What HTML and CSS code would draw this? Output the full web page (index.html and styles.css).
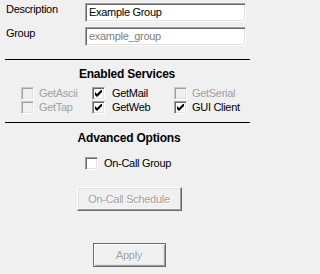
FILE: index.html
```html
<!DOCTYPE html>
<html>
<head>
<meta charset="utf-8">
<link rel="stylesheet" href="styles.css">
</head>
<body>
<div class="panel">
  <div class="field">
    <span class="label">Description</span>
    <div class="textbox">Example Group</div>
  </div>
  <div class="field second">
    <span class="label">Group</span>
    <div class="textbox disabled">example_group</div>
  </div>
  <div class="rule first-rule"></div>
  <div class="title enabled-title">Enabled Services</div>
  <div class="services">
    <div class="check off"><span class="box"></span><span class="txt">GetAscii</span></div>
    <div class="check mid"><span class="box"><svg width="7" height="7" viewBox="0 0 7 7"><polygon points="0,2 2,4 6,0 7,0 7,2 2,7 0,5" fill="#000"/></svg></span><span class="txt">GetMail</span></div>
    <div class="check off"><span class="box"></span><span class="txt">GetSerial</span></div>
    <div class="check off"><span class="box"></span><span class="txt">GetTap</span></div>
    <div class="check mid"><span class="box"><svg width="7" height="7" viewBox="0 0 7 7"><polygon points="0,2 2,4 6,0 7,0 7,2 2,7 0,5" fill="#000"/></svg></span><span class="txt">GetWeb</span></div>
    <div class="check"><span class="box"><svg width="7" height="7" viewBox="0 0 7 7"><polygon points="0,2 2,4 6,0 7,0 7,2 2,7 0,5" fill="#000"/></svg></span><span class="txt">GUI Client</span></div>
  </div>
  <div class="rule second-rule"></div>
  <div class="title adv-title">Advanced Options</div>
  <div class="oncall">
    <div class="check wide"><span class="box"></span><span class="txt">On-Call Group</span></div>
  </div>
  <div class="buttons">
    <div class="button schedule">On-Call Schedule</div>
    <div class="button apply">Apply</div>
  </div>
</div>
</body>
</html>
```
FILE: styles.css
```css
html, body {
  margin: 0;
  padding: 0;
  background: #f0f0f0;
}
.panel {
  width: 252px;
  height: 274px;
  padding-top: 3px;
  box-sizing: border-box;
  font-family: "Liberation Sans", Arial, sans-serif;
  font-size: 11px;
  letter-spacing: -0.3px;
  color: #000;
  display: flex;
  flex-direction: column;
}
.field {
  display: flex;
  align-items: flex-start;
  padding-left: 6px;
}
.field.second {
  margin-top: 5px;
}
.label {
  width: 79px;
  line-height: 12px;
}
.textbox {
  width: 161px;
  height: 19px;
  box-sizing: border-box;
  background: #fff;
  border: 1px solid;
  border-color: #a0a0a0 #fff #fff #a0a0a0;
  box-shadow: inset 1px 1px #696969, inset -1px -1px #e3e3e3;
  padding: 2px 3px 0;
  line-height: 13px;
  white-space: nowrap;
}
.textbox.disabled {
  color: #7f7f7f;
}
.rule {
  height: 1px;
  background: #000;
  margin-left: 5px;
  width: 245px;
}
.first-rule {
  margin-top: 13px;
}
.title {
  font-weight: bold;
  font-size: 12px;
  letter-spacing: -0.2px;
  line-height: 14px;
  text-align: center;
}
.enabled-title {
  margin-top: 7px;
  padding-left: 2px;
}
.services {
  display: grid;
  grid-template-columns: 71px 82px auto;
  row-gap: 1px;
  padding-left: 21px;
  margin-top: 6px;
}
.check {
  display: flex;
  align-items: center;
  height: 13px;
  line-height: 13px;
  white-space: nowrap;
}
.box {
  width: 13px;
  height: 13px;
  box-sizing: border-box;
  border: 1px solid;
  border-color: #a0a0a0 #fff #fff #a0a0a0;
  box-shadow: inset 1px 1px #696969, inset -1px -1px #e3e3e3;
  background: #fff;
  display: flex;
  align-items: center;
  justify-content: center;
  flex: none;
}
.box svg {
  display: block;
}
.txt {
  margin-left: 5px;
}
.mid .txt {
  margin-left: 7px;
}
.check.off .box {
  background: #f0f0f0;
  border-color: #c8c8c8 #fff #fff #c8c8c8;
  box-shadow: inset 1px 1px #a0a0a0, inset -1px -1px #e3e3e3;
}
.check.off .txt {
  color: #a0a0a0;
}
.second-rule {
  margin-top: 8px;
}
.adv-title {
  margin-top: 8px;
  padding-left: 6px;
}
.oncall {
  display: flex;
  padding-left: 85px;
  margin-top: 12px;
}
.wide .txt {
  margin-left: 6px;
}
.buttons {
  display: flex;
  flex-direction: column;
  align-items: center;
  padding-left: 6px;
}
.button {
  box-sizing: border-box;
  height: 24px;
  text-align: center;
  color: #a0a0a0;
  text-shadow: 1px 1px #fff;
  background: #f0f0f0;
}
.schedule {
  width: 105px;
  margin-top: 17px;
  border: 1px solid;
  border-color: #fff #696969 #696969 #fff;
  box-shadow: inset -1px -1px #a0a0a0, inset 1px 1px #e3e3e3;
  line-height: 22px;
}
.apply {
  width: 73px;
  margin-top: 32px;
  border: 1px solid #696969;
  box-shadow: inset 1px 1px #fff, inset -1px -1px #a0a0a0, inset -2px -2px #e3e3e3;
  line-height: 22px;
}
```
